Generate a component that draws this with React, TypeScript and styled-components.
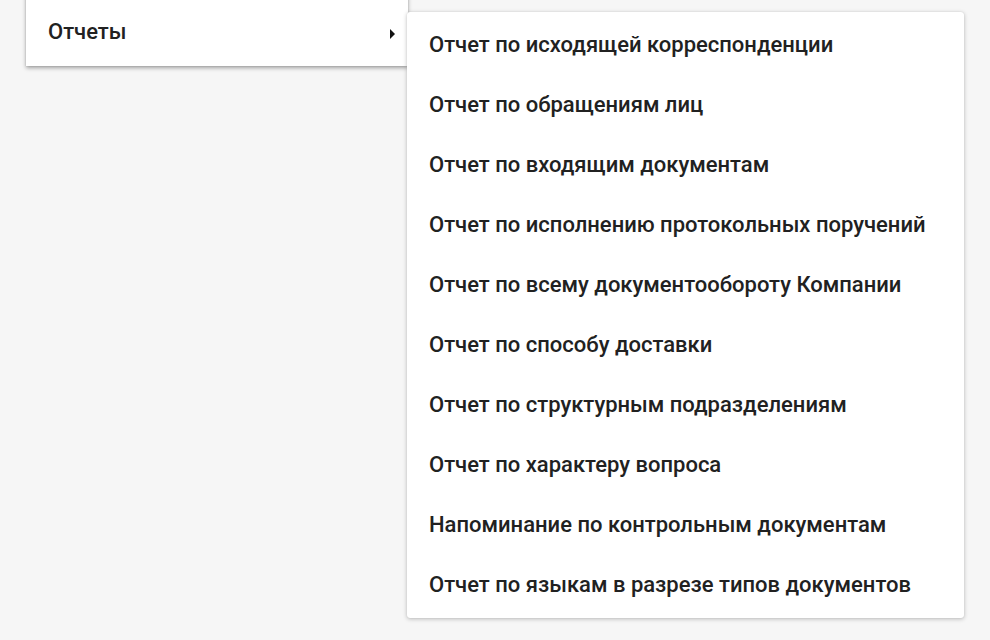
import React from "react";
import styled, {createGlobalStyle} from "styled-components";

const reports = [
    'Отчет по исходящей корреспонденции',
    'Отчет по обращениям лиц',
    'Отчет по входящим документам',
    'Отчет по исполнению протокольных поручений',
    'Отчет по всему документообороту Компании',
    'Отчет по способу доставки',
    'Отчет по структурным подразделениям',
    'Отчет по характеру вопроса',
    'Напоминание по контрольным документам',
    'Отчет по языкам в разрезе типов документов',
];

const App = () =>
{
    return(
        <>
            <GlobalStyle/>
            <Page>
                <MainMenu>
                    <MainItem>
                        <span>Отчеты</span>
                        <Caret/>
                    </MainItem>
                </MainMenu>
                <SubMenu>
                    {reports.map(r => <SubItem key={r}>{r}</SubItem>)}
                </SubMenu>
            </Page>
        </>
    )
}

const GlobalStyle = createGlobalStyle`
  html, body {
    margin: 0;
    padding: 0;
    background: #f6f6f6;
    font-family: Roboto, 'Noto Sans', sans-serif;
  }
`

const Page = styled.div`
  width: 990px;
  height: 640px;
  position: relative;
  overflow: hidden;
  background: #f6f6f6;
`

const MainMenu = styled.div`
  position: absolute;
  left: 26px;
  top: -10px;
  width: 382px;
  padding-top: 10px;
  background: #fff;
  box-shadow: 0 2px 4px rgba(0, 0, 0, 0.35), 0 0 1px rgba(0, 0, 0, 0.2);
`

const MainItem = styled.div`
  height: 66px;
  padding: 0 13px 0 22px;
  box-sizing: border-box;
  display: flex;
  align-items: center;
  justify-content: space-between;
  font-size: 22px;
  font-weight: 500;
  color: #212121;
  padding-bottom: 3px;
`

const Caret = styled.span`
  width: 0;
  height: 0;
  margin-top: 4px;
  border-top: 5px solid transparent;
  border-bottom: 5px solid transparent;
  border-left: 5px solid #111;
`

const SubMenu = styled.div`
  position: absolute;
  left: 407px;
  top: 12px;
  width: 557px;
  padding: 2px 0 4px;
  background: #fff;
  border-radius: 3px;
  box-shadow: 0 1px 4px rgba(0, 0, 0, 0.25), 0 0 1px rgba(0, 0, 0, 0.15);
`

const SubItem = styled.div`
  height: 60px;
  padding: 0 22px;
  display: flex;
  align-items: center;
  font-size: 22px;
  font-weight: 500;
  color: #212121;
  white-space: nowrap;
`

export default App;
